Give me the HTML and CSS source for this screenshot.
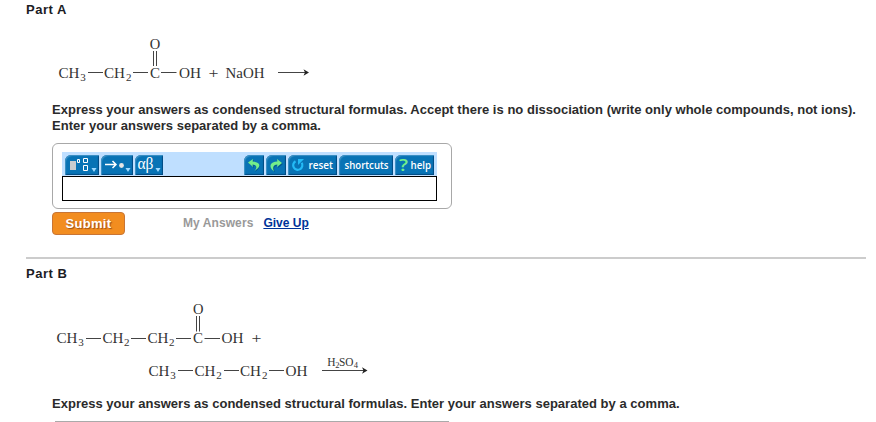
FILE: index.html
```html
<!DOCTYPE html>
<html lang="en">
<head>
<meta charset="utf-8">
<title>Structural formulas</title>
<link rel="stylesheet" href="styles.css">
</head>
<body>
<main class="page">
  <section class="part">
    <h2 class="part-title">Part A</h2>
    <svg class="formula formula-a" width="260" height="52" viewBox="56 34 260 52">
      <g class="atoms">
        <text x="149.8" y="49" textLength="10.5" lengthAdjust="spacingAndGlyphs">O</text>
        <text x="58.5" y="78" textLength="21" lengthAdjust="spacingAndGlyphs">CH</text><text class="sub" x="80.3" y="81">3</text>
        <text x="104" y="78" textLength="21" lengthAdjust="spacingAndGlyphs">CH</text><text class="sub" x="126" y="81">2</text>
        <text x="150" y="78" textLength="10" lengthAdjust="spacingAndGlyphs">C</text>
        <text x="179" y="78" textLength="22" lengthAdjust="spacingAndGlyphs">OH</text>
        <text x="208.5" y="78" textLength="10" lengthAdjust="spacingAndGlyphs">+</text>
        <text x="225.5" y="78" textLength="39" lengthAdjust="spacingAndGlyphs">NaOH</text>
      </g>
      <path class="bond" d="M88 72.500h15M133 72.500h15M161 72.500h15.500M153.500 51v15M156.500 51v15M278 72.500h29"/>
      <path class="tip" d="M303.500 69.300L309 72.500l-5.500 3.200 1.500-3.200z"/>
    </svg>
    <p class="prompt">Express your answers as condensed structural formulas. Accept there is no dissociation (write only whole compounds, not ions).<br>Enter your answers separated by a comma.</p>

    <div class="answer-box">
      <div class="toolbar">
        <button class="tool templates" aria-label="templates">
          <svg width="34" height="20" viewBox="0 0 34 20"><path fill="#c9cccf" d="M5 6h6v9H5z"/><path fill="none" stroke="#fff" d="M12.500 4.500h2v3h-2zM18.500 3.500h4v4h-4zM18.500 10.500h4v5h-4z"/><path fill="#9ed9ff" d="M26.500 13h5l-2.500 4z"/></svg>
        </button>
        <button class="tool arrows" aria-label="arrows">
          <svg width="32" height="20" viewBox="0 0 32 20"><path fill="none" stroke="#fff" stroke-width="1.500" d="M4 9.500h11M11.500 6L15 9.500 11.500 13"/><circle cx="20.500" cy="10.500" r="2.400" fill="#e5e5e5"/><path fill="#9ed9ff" d="M24.500 13h5l-2.500 4z"/></svg>
        </button>
        <button class="tool greek" aria-label="Greek letters">
          <svg width="28" height="20" viewBox="0 0 28 20"><text class="greek-text" x="2.500" y="14" textLength="16" lengthAdjust="spacingAndGlyphs">αβ</text><path fill="#9ed9ff" d="M20.500 13h5l-2.500 4z"/></svg>
        </button>
        <span class="spacer"></span>
        <button class="tool undo" aria-label="undo">
          <svg width="20" height="20" viewBox="0 0 20 20"><path class="shade" d="M5 8l5-3-.5 2.500c6 0 9 4.500 1.500 9.500 3-4 2-6-1.500-6.500L10 13z"/><path fill="#74ee8b" d="M4 7.500L9 4l-.4 2.600c7 .2 10 4.400 1.900 9.400 3.200-3.800 2-6.300-2-6.600L9 12z"/></svg>
        </button>
        <button class="tool redo" aria-label="redo">
          <svg width="20" height="20" viewBox="0 0 20 20"><path class="shade" d="M17 9l-5-4 .5 2.500c-7 0-9 5-3.500 10-2-5-.5-7 3.500-7L12 13z"/><path fill="#74ee8b" d="M16 8l-5-4 .4 2.600c-7.400.2-9.400 5.400-3.400 9.900-1.800-4.500-.5-6.900 3.400-7.100L11 12z"/></svg>
        </button>
        <button class="tool reset">
          <svg width="49" height="20" viewBox="0 0 49 20"><path fill="none" stroke="#24baf6" stroke-width="2.200" d="M7.500 6.200a4.600 4.600 0 1 0 6.200 1.600"/><path fill="#24baf6" d="M10 10V4h6l-2.200 2.200z"/><text class="label" x="20.500" y="13.500" textLength="24.500" lengthAdjust="spacingAndGlyphs">reset</text></svg>
        </button>
        <button class="tool shortcuts">
          <svg width="54" height="20" viewBox="0 0 54 20"><text class="label" x="5.500" y="13.500" textLength="44" lengthAdjust="spacingAndGlyphs">shortcuts</text></svg>
        </button>
        <button class="tool help">
          <svg width="39" height="20" viewBox="0 0 39 20"><text class="question" x="4" y="15.500" textLength="9" lengthAdjust="spacingAndGlyphs">?</text><text class="label" x="15.500" y="13.500" textLength="20.500" lengthAdjust="spacingAndGlyphs">help</text></svg>
        </button>
      </div>
      <div class="entry"></div>
    </div>

    <div class="actions">
      <button class="submit">Submit</button>
      <span class="my-answers">My Answers</span>
      <a class="give-up" href="#">Give Up</a>
    </div>
  </section>

  <section class="part part-b">
    <h2 class="part-title">Part B</h2>
    <svg class="formula formula-b" width="320" height="84" viewBox="54 299 320 84">
      <g class="atoms">
        <text x="193" y="314" textLength="10.500" lengthAdjust="spacingAndGlyphs">O</text>
        <text x="56.500" y="343.300" textLength="21" lengthAdjust="spacingAndGlyphs">CH</text><text class="sub" x="78.300" y="346.300">3</text>
        <text x="102.500" y="343.300" textLength="21" lengthAdjust="spacingAndGlyphs">CH</text><text class="sub" x="124" y="346.300">2</text>
        <text x="147.500" y="343.300" textLength="21" lengthAdjust="spacingAndGlyphs">CH</text><text class="sub" x="169" y="346.300">2</text>
        <text x="193" y="343.300" textLength="10" lengthAdjust="spacingAndGlyphs">C</text>
        <text x="221.500" y="343.300" textLength="22" lengthAdjust="spacingAndGlyphs">OH</text>
        <text x="251.500" y="343.300" textLength="10" lengthAdjust="spacingAndGlyphs">+</text>
        <text x="148.500" y="375.500" textLength="21" lengthAdjust="spacingAndGlyphs">CH</text><text class="sub" x="170.300" y="378.500">3</text>
        <text x="194.500" y="375.500" textLength="21" lengthAdjust="spacingAndGlyphs">CH</text><text class="sub" x="216.300" y="378.500">2</text>
        <text x="240" y="375.500" textLength="21" lengthAdjust="spacingAndGlyphs">CH</text><text class="sub" x="262" y="378.500">2</text>
        <text x="285.500" y="375.500" textLength="22" lengthAdjust="spacingAndGlyphs">OH</text>
        <g class="reagent"><text x="327.300" y="366">H</text><text class="tiny" x="335.300" y="368">2</text><text x="339" y="366" textLength="14.500" lengthAdjust="spacingAndGlyphs">SO</text><text class="tiny" x="353.700" y="368">4</text></g>
      </g>
      <path class="bond" d="M86 338.500h15M131 338.500h15M176 338.500h15M204.500 338.500h15.500M196.500 316v15.500M199.500 316v15.500M178 370.500h15M224 370.500h15M269 370.500h15M322 370.500h44"/>
      <path class="tip" d="M362 367.300l5.500 3.200-5.500 3.200 1.500-3.200z"/>
    </svg>
    <p class="prompt">Express your answers as condensed structural formulas. Enter your answers separated by a comma.</p>
    <div class="next-box"></div>
  </section>
</main>
</body>
</html>
```
FILE: styles.css
```css
* { box-sizing: border-box; }
body {
  margin: 0;
  background: #fff;
  color: #2b2b2b;
  font: bold 13px/16px "Liberation Sans", Arial, sans-serif;
  overflow: hidden;
}
.page { height: 422px; padding: 2px 10px 0 26px; overflow: hidden; }
.part-title { margin: 0; font-size: 13px; line-height: 16px; color: #1c1c24; letter-spacing: .5px; }
.formula { display: block; }
.formula-a { margin: 16px 0 0 30px; }
.formula-b { margin: 17px 0 0 28px; }
.atoms { font-family: "Liberation Serif", serif; font-size: 14.5px; font-weight: normal; fill: #333; }
.sub { font-size: 11px; }
.reagent { font-size: 11.5px; }
.tiny { font-size: 8.5px; }
.bond { fill: none; stroke: #444; stroke-width: 1; }
.tip { fill: #222; }
.prompt { margin: 16px 0 0 26px; white-space: nowrap; letter-spacing: .02px; }

.answer-box {
  width: 400px;
  height: 66px;
  margin: 9px 0 0 26px;
  padding: 8px 14px 0 9px;
  border: 1px solid #a8a8a8;
  border-radius: 6px;
}
.toolbar { display: flex; height: 24px; padding: 3px 3px 0; background: #bfdfff; }
.tool {
  display: block;
  height: 20px;
  padding: 0;
  border: 0;
  border-radius: 6px 0 0;
  background: #0873b5;
  box-shadow: inset 1px 1px 1px #4193c5, inset -1px -1px 1px #034b82;
}
.tool svg { display: block; overflow: visible; }
.arrows, .greek, .redo, .reset, .shortcuts, .help { margin-left: 2px; }
.spacer { flex: 1; }
.label { fill: #fff; font: 600 10.5px "Open Sans", sans-serif; }
.question { fill: #74ee8b; font: 600 16px "Open Sans", sans-serif; }
.greek-text { fill: #fff; font: 16px "Liberation Serif", serif; }
.shade { fill: #06588d; }
.entry { height: 25px; border: 1px solid #000; }

.actions { display: flex; align-items: center; height: 24px; margin: 2px 0 0 26px; }
.submit {
  width: 73px;
  height: 23px;
  padding: 0;
  border: 1px solid #c87535;
  border-radius: 4px;
  background: #f28d20;
  color: #fff;
  font: bold 13px "Liberation Sans", Arial, sans-serif;
  letter-spacing: .3px;
  text-shadow: 1px 1px 1px #995019;
}
.my-answers { margin-left: 58px; color: #999; font-size: 12px; letter-spacing: .08px; }
.give-up { margin-left: 10px; color: #039; font-size: 12px; }
.part-b { margin-top: 22px; padding-top: 7px; border-top: 2px solid #ccc; }
.part-b .prompt { margin-top: 13px; }
.next-box { width: 394px; height: 8px; margin: 9px 0 0 29px; border-top: 1px solid #aaa; }
```
